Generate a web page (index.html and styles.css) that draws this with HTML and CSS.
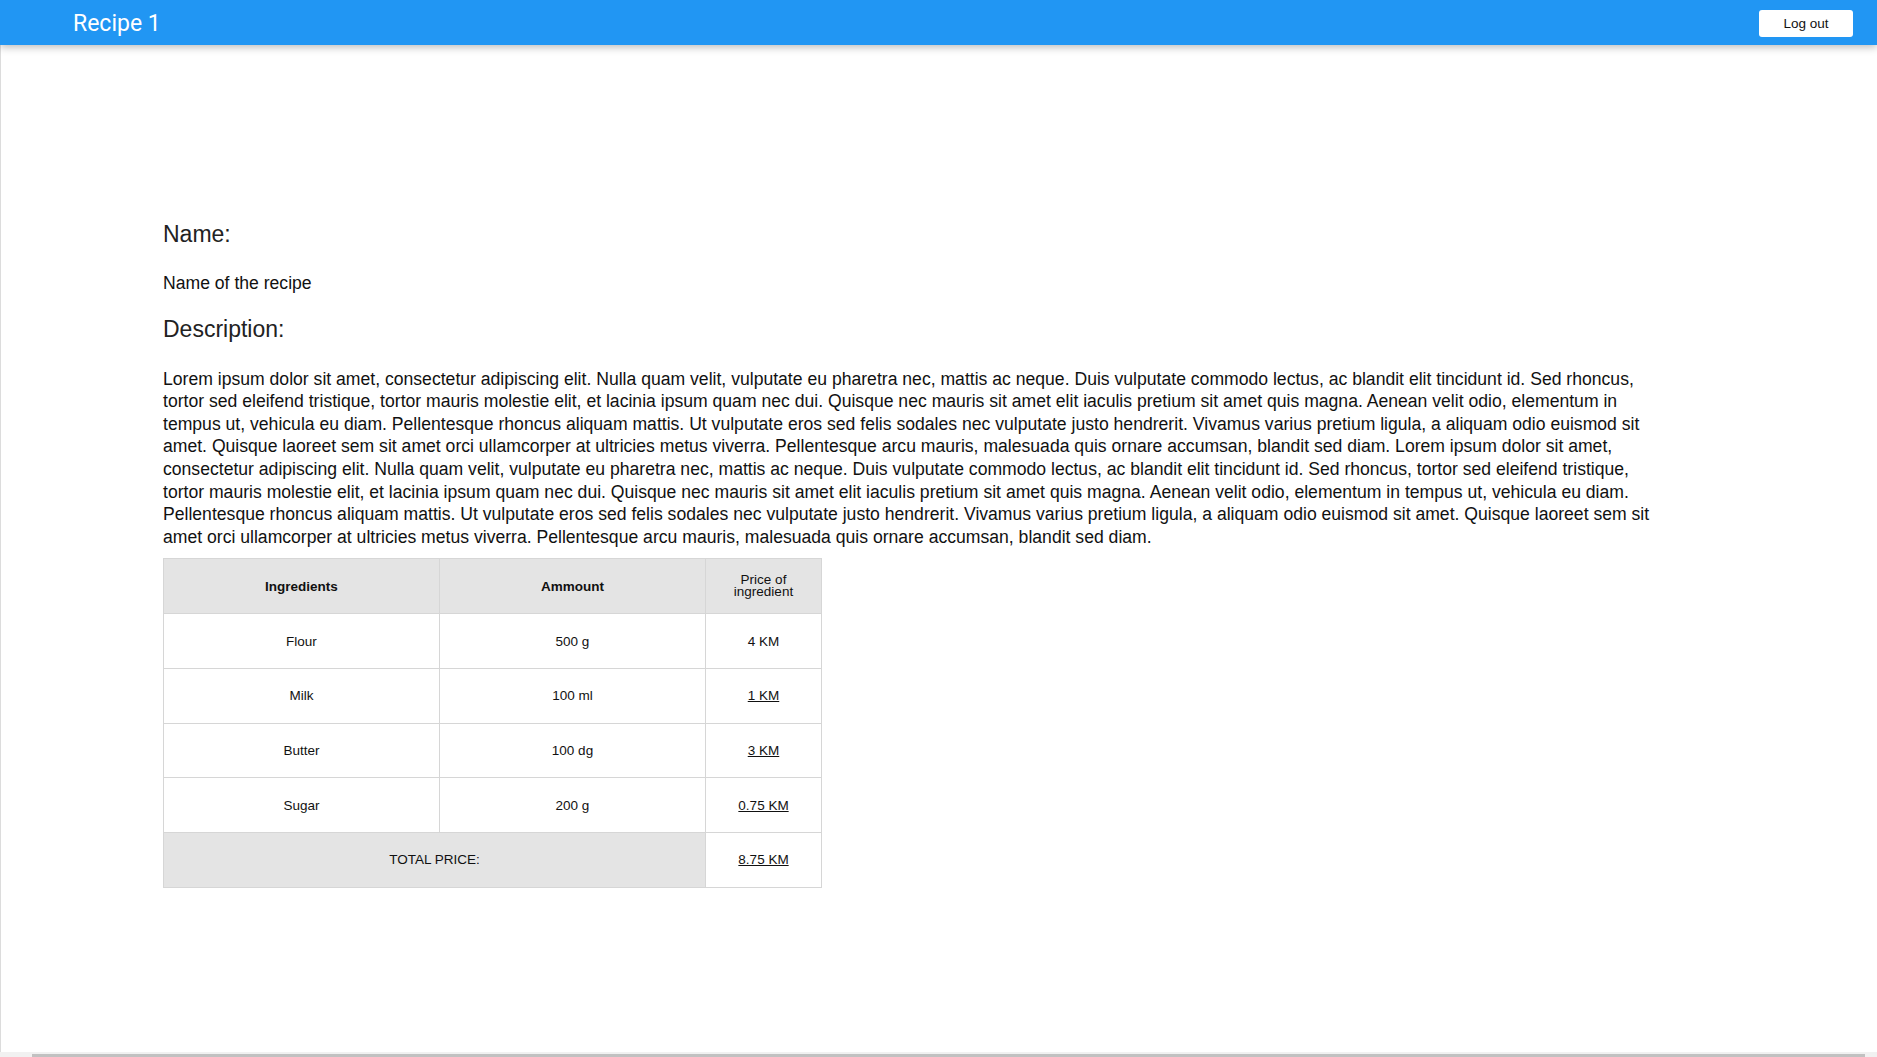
FILE: index.html
```html
<!DOCTYPE html>
<html lang="en">
<head>
<meta charset="utf-8">
<title>Recipe 1</title>
<link rel="stylesheet" href="styles.css">
</head>
<body>
<header class="topbar">
  <div class="brand">Recipe 1</div>
  <button class="logout" type="button">Log out</button>
</header>
<main class="page">
  <section class="recipe">
    <h2 class="label label-name">Name:</h2>
    <p class="recipe-name">Name of the recipe</p>
    <h2 class="label label-desc">Description:</h2>
    <p class="description">Lorem ipsum dolor sit amet, consectetur adipiscing elit. Nulla quam velit, vulputate eu pharetra nec, mattis ac neque. Duis vulputate commodo lectus, ac blandit elit tincidunt id. Sed rhoncus, tortor sed eleifend tristique, tortor mauris molestie elit, et lacinia ipsum quam nec dui. Quisque nec mauris sit amet elit iaculis pretium sit amet quis magna. Aenean velit odio, elementum in tempus ut, vehicula eu diam. Pellentesque rhoncus aliquam mattis. Ut vulputate eros sed felis sodales nec vulputate justo hendrerit. Vivamus varius pretium ligula, a aliquam odio euismod sit amet. Quisque laoreet sem sit amet orci ullamcorper at ultricies metus viverra. Pellentesque arcu mauris, malesuada quis ornare accumsan, blandit sed diam. Lorem ipsum dolor sit amet, consectetur adipiscing elit. Nulla quam velit, vulputate eu pharetra nec, mattis ac neque. Duis vulputate commodo lectus, ac blandit elit tincidunt id. Sed rhoncus, tortor sed eleifend tristique, tortor mauris molestie elit, et lacinia ipsum quam nec dui. Quisque nec mauris sit amet elit iaculis pretium sit amet quis magna. Aenean velit odio, elementum in tempus ut, vehicula eu diam. Pellentesque rhoncus aliquam mattis. Ut vulputate eros sed felis sodales nec vulputate justo hendrerit. Vivamus varius pretium ligula, a aliquam odio euismod sit amet. Quisque laoreet sem sit amet orci ullamcorper at ultricies metus viverra. Pellentesque arcu mauris, malesuada quis ornare accumsan, blandit sed diam.</p>
    <table class="ingredients">
      <colgroup>
        <col class="c1"><col class="c2"><col class="c3">
      </colgroup>
      <thead>
        <tr>
          <th class="strong">Ingredients</th>
          <th class="strong">Ammount</th>
          <th class="light">Price of<br>ingredient</th>
        </tr>
      </thead>
      <tbody>
        <tr><td>Flour</td><td>500 g</td><td>4 KM</td></tr>
        <tr><td>Milk</td><td>100 ml</td><td><a href="#">1 KM</a></td></tr>
        <tr><td>Butter</td><td>100 dg</td><td><a href="#">3 KM</a></td></tr>
        <tr><td>Sugar</td><td>200 g</td><td><a href="#">0.75 KM</a></td></tr>
        <tr class="total"><td colspan="2" class="total-label">TOTAL PRICE:</td><td><a href="#">8.75 KM</a></td></tr>
      </tbody>
    </table>
  </section>
</main>
<div class="hscroll"><div class="hscroll-thumb"></div></div>
</body>
</html>
```

FILE: styles.css
```css
html, body {
  margin: 0;
  padding: 0;
  background: #ffffff;
}

body {
  font-family: "Liberation Sans", Arial, sans-serif;
  color: #111;
  overflow: hidden;
}

.topbar {
  position: relative;
  z-index: 2;
  height: 45px;
  background: #2196f3;
  display: flex;
  align-items: center;
  justify-content: space-between;
  padding: 0 24px 0 73px;
  box-shadow: 0 2px 8px rgba(0, 0, 0, 0.28);
}

.brand {
  font-family: Roboto, "Noto Sans", sans-serif;
  font-size: 23px;
  color: #ffffff;
  line-height: 1;
  margin-top: 1px;
}

.logout {
  width: 94px;
  height: 27px;
  background: #ffffff;
  border: none;
  border-radius: 3px;
  font-family: "Liberation Sans", Arial, sans-serif;
  font-size: 13.5px;
  color: #111;
  padding: 0;
  margin-top: 2px;
}

.page {
  min-height: calc(100vh - 45px);
  border-left: 1px solid #dcdcdc;
  box-sizing: border-box;
}

.recipe {
  width: 1500px;
  padding: 176px 0 0 162px;
}

.label {
  font-weight: normal;
  font-size: 23px;
  line-height: 27px;
  color: #222;
  margin: 0;
}

.recipe-name {
  font-size: 17.6px;
  line-height: 22.6px;
  margin: 24px 0 0;
}

.label-desc {
  margin-top: 21px;
}

.description {
  font-size: 17.6px;
  line-height: 22.6px;
  margin: 25px 0 0;
  color: #111;
}

.ingredients {
  margin-top: 10px;
  border-collapse: collapse;
  width: 658px;
  table-layout: fixed;
  font-size: 13.5px;
  color: #111;
  text-align: center;
}

.c1 { width: 276px; }
.c2 { width: 266px; }
.c3 { width: 116px; }

.ingredients th,
.ingredients td {
  border: 1px solid #d6d6d6;
  height: 53.7px;
  padding: 0;
  vertical-align: middle;
}

.ingredients thead th {
  background: #e4e4e4;
  height: 54px;
}

.ingredients th.strong {
  font-weight: bold;
}

.ingredients th.light {
  font-weight: normal;
  line-height: 12.5px;
}

.ingredients a {
  color: #111;
  text-decoration: underline;
}

.total-label {
  background: #e4e4e4;
}

.hscroll {
  position: fixed;
  left: 0;
  right: 0;
  bottom: 0;
  height: 5px;
  background: #f1f1f1;
  z-index: 5;
}

.hscroll-thumb {
  position: absolute;
  left: 32px;
  right: 12px;
  bottom: 0;
  height: 3px;
  background: #c1c1c1;
}
```
